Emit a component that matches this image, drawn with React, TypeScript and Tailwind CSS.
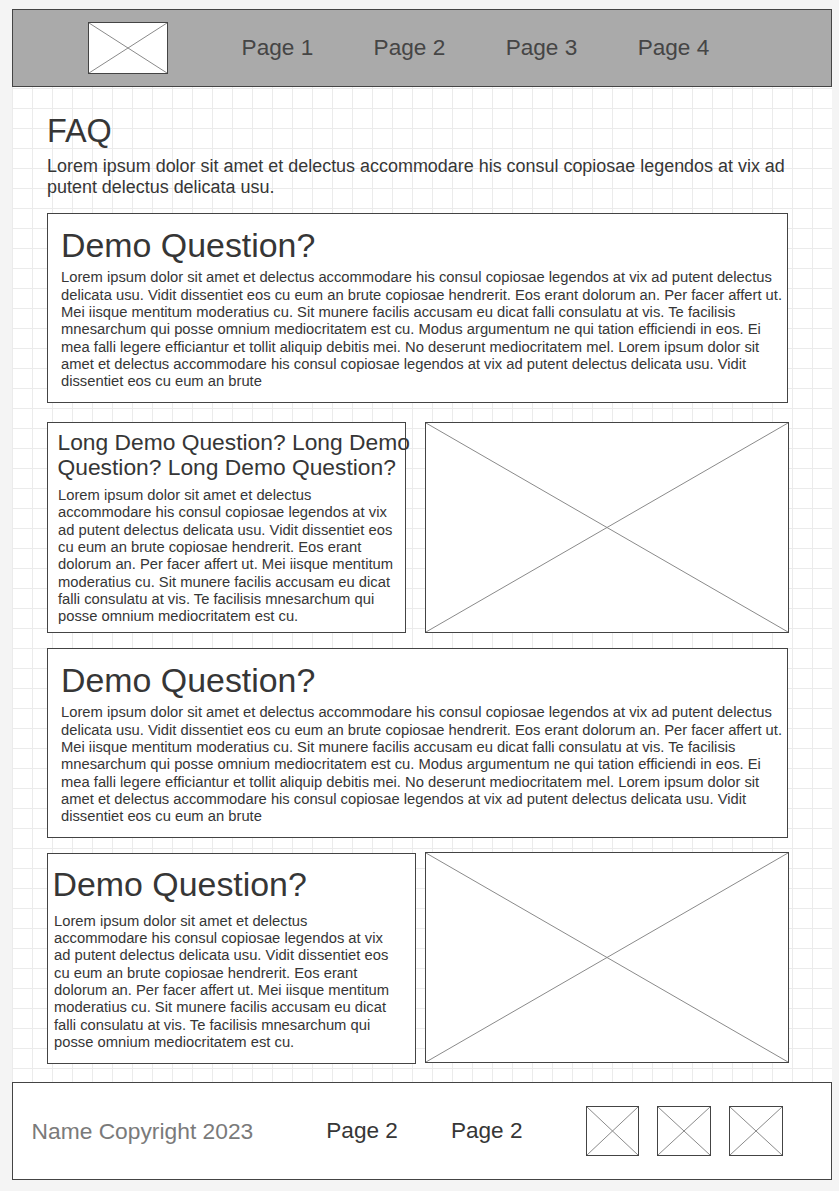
import React from "react";

const LONG =
  "Lorem ipsum dolor sit amet et delectus accommodare his consul copiosae legendos at vix ad putent delectus delicata usu. Vidit dissentiet eos cu eum an brute copiosae hendrerit. Eos erant dolorum an. Per facer affert ut. Mei iisque mentitum moderatius cu. Sit munere facilis accusam eu dicat falli consulatu at vis. Te facilisis mnesarchum qui posse omnium mediocritatem est cu. Modus argumentum ne qui tation efficiendi in eos. Ei mea falli legere efficiantur et tollit aliquip debitis mei. No deserunt mediocritatem mel. Lorem ipsum dolor sit amet et delectus accommodare his consul copiosae legendos at vix ad putent delectus delicata usu. Vidit dissentiet eos cu eum an brute";

const SHORT =
  "Lorem ipsum dolor sit amet et delectus accommodare his consul copiosae legendos at vix ad putent delectus delicata usu. Vidit dissentiet eos cu eum an brute copiosae hendrerit. Eos erant dolorum an. Per facer affert ut. Mei iisque mentitum moderatius cu. Sit munere facilis accusam eu dicat falli consulatu at vis. Te facilisis mnesarchum qui posse omnium mediocritatem est cu.";

function Placeholder({ className }: { className: string }) {
  return (
    <div className={`relative border border-[#444444] bg-white ${className}`}>
      <svg
        className="absolute inset-0 h-full w-full"
        viewBox="0 0 100 100"
        preserveAspectRatio="none"
      >
        <line x1="0" y1="0" x2="100" y2="100" stroke="#8a8a8a" strokeWidth="1" vectorEffect="non-scaling-stroke" />
        <line x1="100" y1="0" x2="0" y2="100" stroke="#8a8a8a" strokeWidth="1" vectorEffect="non-scaling-stroke" />
      </svg>
    </div>
  );
}

function WideCard() {
  return (
    <div className="flex h-[190px] w-[741px] flex-col border border-[#444444] bg-white pl-[13px] pr-[2px] pt-[12px]">
      <div className="text-[33.9px] leading-[38px] text-[#363636]">Demo Question?</div>
      <p className="mt-[5.5px] text-[14.75px] leading-[17.3px] text-[#363636]">{LONG}</p>
    </div>
  );
}

export default function App() {
  return (
    <div className="min-h-[1191px] w-full bg-[#f4f4f4] pl-[12px] pt-[9px] font-['Liberation_Sans',Arial,sans-serif]">
      <div className="flex w-[820px] flex-col">
        {/* Header */}
        <header className="flex h-[78px] items-center border border-[#444444] bg-[#aaaaaa] pl-[75px]">
          <Placeholder className="h-[52px] w-[80px]" />
          <nav className="ml-[73.6px] flex gap-[60.4px] text-[22.6px] leading-[26px] text-[#454545]">
            <span>Page 1</span>
            <span>Page 2</span>
            <span>Page 3</span>
            <span>Page 4</span>
          </nav>
        </header>

        {/* Main with grid */}
        <main className="flex h-[995px] flex-col bg-white bg-[linear-gradient(to_right,#ebebeb_1px,transparent_1px),linear-gradient(to_bottom,#ebebeb_1px,transparent_1px)] bg-[size:20px_20px] bg-[position:0px_1px] pl-[35px] pt-[26px]">
          <h1 className="text-[32.4px] leading-[37px] text-[#363636]">FAQ</h1>
          <p className="mt-[6.4px] w-[741px] text-[17.95px] leading-[20.5px] text-[#363636]">
            Lorem ipsum dolor sit amet et delectus accommodare his consul copiosae legendos at vix ad putent delectus delicata usu.
          </p>

          <div className="mt-[15.5px]">
            <WideCard />
          </div>

          <div className="mt-[19px] flex">
            <div className="flex h-[211px] w-[359px] flex-col border border-[#444444] bg-white pt-[7px]">
              <div className="w-[366px] pl-[9.5px] text-[22.8px] leading-[25.5px] text-[#363636]">
                Long Demo Question? Long Demo Question? Long Demo Question?
              </div>
              <p className="mt-[6.2px] w-[352px] pl-[10px] text-[14.75px] leading-[17.3px] text-[#363636]">{SHORT}</p>
            </div>
            <Placeholder className="ml-[19px] h-[211px] w-[364px]" />
          </div>

          <div className="mt-[15px]">
            <WideCard />
          </div>

          <div className="mt-[14px] flex items-start">
            <div className="mt-[1px] flex h-[211px] w-[369px] flex-col border border-[#444444] bg-white pt-[11.4px]">
              <div className="pl-[4.5px] text-[33.9px] leading-[38px] text-[#363636]">Demo Question?</div>
              <p className="mt-[9.6px] w-[347px] pl-[6px] text-[14.75px] leading-[17.3px] text-[#363636]">{SHORT}</p>
            </div>
            <Placeholder className="ml-[9px] h-[211px] w-[364px]" />
          </div>
        </main>

        {/* Footer */}
        <footer className="flex h-[98px] items-center border border-[#444444] bg-white pl-[18.5px]">
          <span className="text-[22.8px] leading-[26px] text-[#7a7a7a]">Name Copyright 2023</span>
          <span className="ml-[73px] text-[22.6px] leading-[26px] text-[#363636]">Page 2</span>
          <span className="ml-[53px] text-[22.6px] leading-[26px] text-[#363636]">Page 2</span>
          <div className="ml-[63px] flex gap-[18px]">
            <Placeholder className="h-[50px] w-[53px]" />
            <Placeholder className="h-[50px] w-[54px]" />
            <Placeholder className="h-[50px] w-[54px]" />
          </div>
        </footer>
      </div>
    </div>
  );
}
